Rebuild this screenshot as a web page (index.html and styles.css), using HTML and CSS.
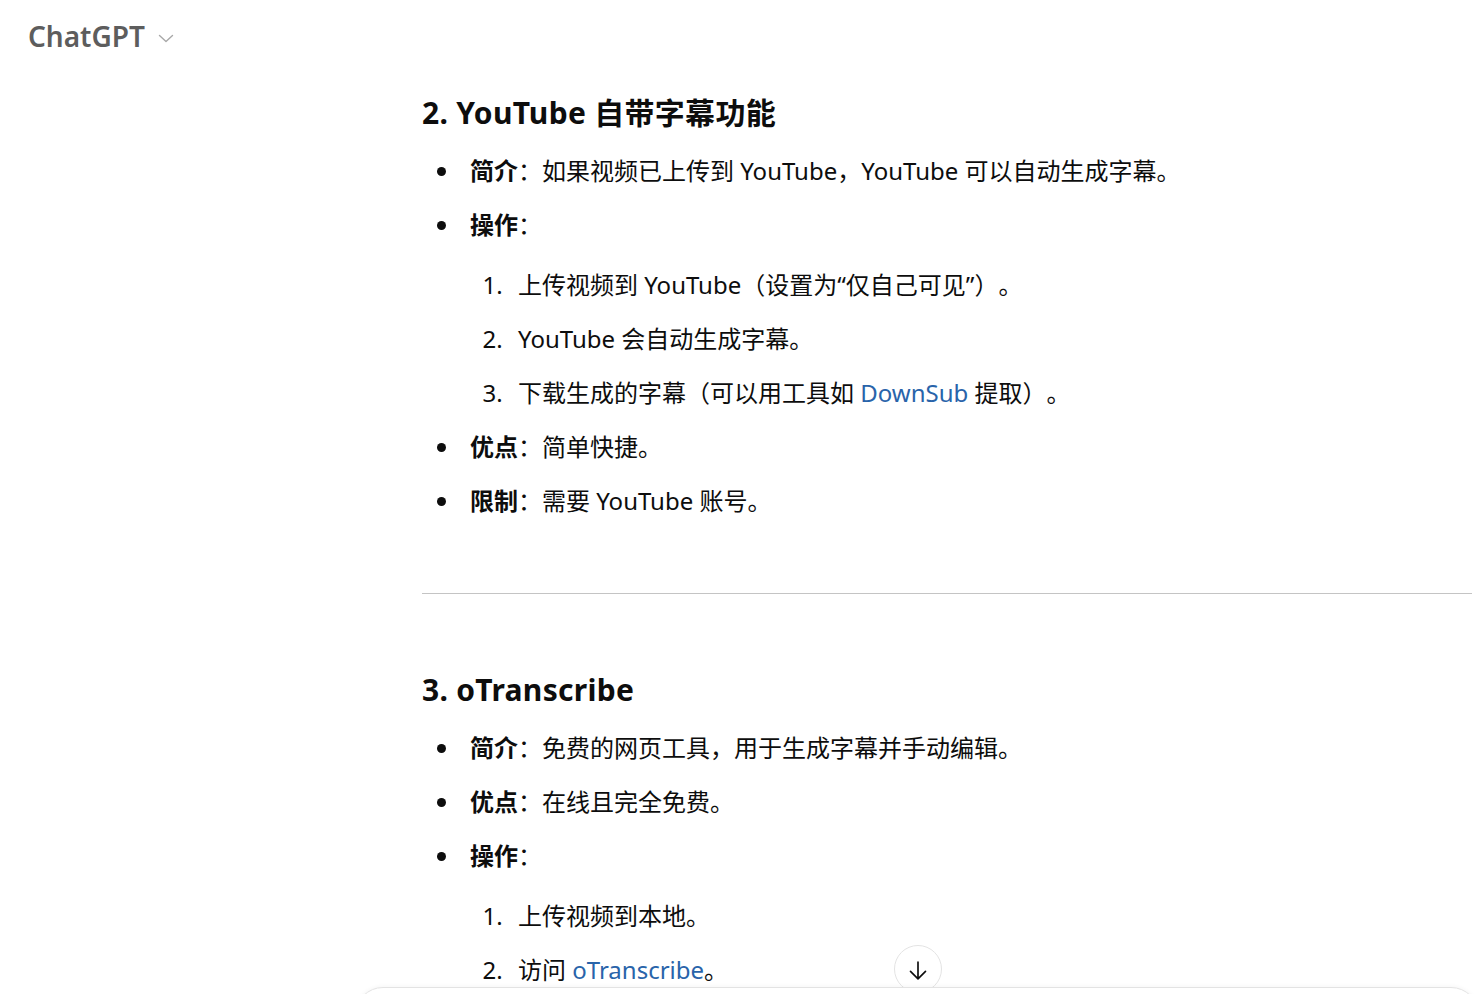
FILE: index.html
```html
<!DOCTYPE html>
<html lang="zh-CN">
<head>
<meta charset="utf-8">
<title>ChatGPT</title>
<link rel="stylesheet" href="styles.css">
</head>
<body>
<header class="topbar">
  <span class="brand">ChatGPT</span>
  <svg class="chev" width="18" height="18" viewBox="0 0 18 18" fill="none"><path d="M2.5 6.5l6.5 6 6.5-6" stroke="#a8a8a8" stroke-width="1.4" stroke-linecap="round" stroke-linejoin="round"/></svg>
</header>
<main class="content">
  <h3>2. YouTube 自带字幕功能</h3>
  <ul>
    <li><strong>简介</strong>：如果视频已上传到 YouTube，YouTube 可以自动生成字幕。</li>
    <li><strong>操作</strong>：
      <ol>
        <li>上传视频到 YouTube（设置为“仅自己可见”）。</li>
        <li>YouTube 会自动生成字幕。</li>
        <li>下载生成的字幕（可以用工具如 <a href="#">DownSub</a> 提取）。</li>
      </ol>
    </li>
    <li><strong>优点</strong>：简单快捷。</li>
    <li><strong>限制</strong>：需要 YouTube 账号。</li>
  </ul>
  <hr>
  <h3>3. oTranscribe</h3>
  <ul>
    <li><strong>简介</strong>：免费的网页工具，用于生成字幕并手动编辑。</li>
    <li><strong>优点</strong>：在线且完全免费。</li>
    <li><strong>操作</strong>：
      <ol>
        <li>上传视频到本地。</li>
        <li>访问 <a href="#">oTranscribe</a>。</li>
      </ol>
    </li>
  </ul>
</main>
<button class="scroll-down" type="button" aria-label="scroll down">
  <svg width="24" height="24" viewBox="0 0 24 24" fill="none"><path d="M12 2v20M3 13l9 9 9-9" stroke="#0d0d0d" stroke-width="2" stroke-linecap="round" stroke-linejoin="round"/></svg>
</button>
<div class="composer"></div>
</body>
</html>
```
FILE: styles.css
```css
html, body {
  margin: 0;
  padding: 0;
  background: #ffffff;
  height: 100%;
  overflow: hidden;
}
body {
  font-family: "Noto Sans", "Noto Sans CJK SC", sans-serif;
  color: #0d0d0d;
  text-spacing-trim: space-all;
}
.topbar {
  display: flex;
  align-items: center;
  gap: 12px;
  height: 72px;
  padding-left: 28px;
}
.brand {
  font-size: 28px;
  font-weight: 600;
  color: #5d5d5d;
  margin-top: -1px;
}
.chev {
  width: 18px;
  height: 18px;
  margin-top: 3px;
}
.content {
  margin-left: 422px;
  width: 1050px;
  font-size: 24px;
  line-height: 42px;
}
h3 {
  font-size: 30px;
  font-weight: 700;
  line-height: 48px;
  margin: 17px 0 13px;
  color: #0d0d0d;
  letter-spacing: 0.3px;
}
ul, ol {
  margin: 0;
  padding-left: 39px;
}
ul { list-style: disc; }
li {
  margin: 12px 0;
  padding-left: 9px;
}
li ol {
  margin: 18px 0 12px;
}
strong { font-weight: 700; }
a {
  color: #2964aa;
  text-decoration: none;
}
hr {
  border: 0;
  border-top: 1px solid #c4c4c4;
  margin: 71px 0 72px;
}
.scroll-down {
  position: fixed;
  left: 894px;
  top: 945px;
  width: 48px;
  height: 48px;
  border-radius: 50%;
  border: 1px solid #e3e3e3;
  background: #ffffff;
  display: flex;
  align-items: center;
  justify-content: center;
  padding: 0;
}
.scroll-down svg {
  width: 20px;
  height: 21px;
  margin-top: 2px;
}
.composer {
  position: fixed;
  left: 355px;
  top: 987px;
  width: 1122px;
  height: 120px;
  border: 1px solid #e3e3e3;
  border-radius: 28px;
  background: #ffffff;
  box-shadow: 0 -1px 4px rgba(0,0,0,0.04);
}
```
